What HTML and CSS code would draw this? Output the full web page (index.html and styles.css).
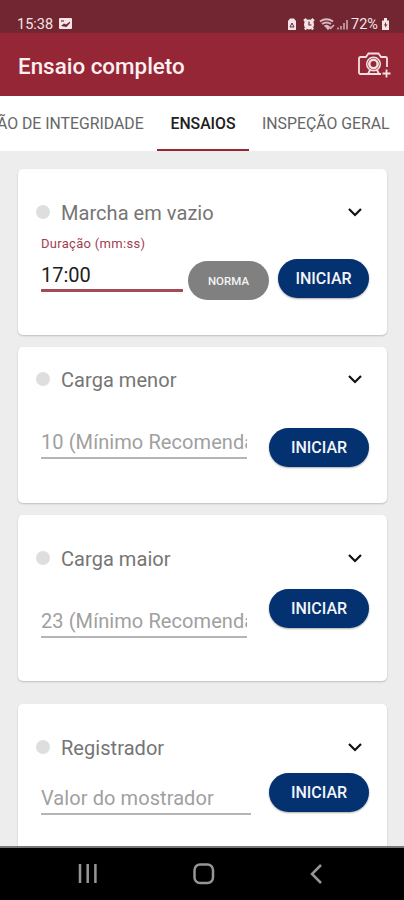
FILE: index.html
```
<!DOCTYPE html>
<html lang="pt">
<head>
<meta charset="utf-8">
<title>Ensaio completo</title>
<link rel="stylesheet" href="styles.css">
</head>
<body>
<div class="screen">
  <div class="status">
    <span class="time">15:38</span>
    <svg class="photo" width="13" height="11" viewBox="0 0 13 11"><rect width="13" height="11" rx="1" fill="#f3e5e7"/><path d="M2 8l3-2.500 2 1L11 3.500v1.500L7.500 9z" fill="#722633"/><rect x="2" y="2" width="3" height="2" fill="#a77780"/></svg>
    <svg class="indicators" width="61" height="14" viewBox="0 0 61 14">
      <path d="M1 4l2-2.500h4L9 4v9H1z" fill="#f3e5e7"/><path d="M3 10l2-4 2 4z" fill="none" stroke="#722633"/>
      <circle cx="22" cy="7.500" r="5" fill="#f3e5e7"/><path d="M17 4l2.500-2M27 4l-2.500-2M18 12.500l1-1.500M26 12.500L25 11" stroke="#f3e5e7" stroke-width="2.400"/><path d="M22 4.500v3.500h2.500" fill="none" stroke="#722633" stroke-width="1.200"/>
      <path d="M33 4.500Q39.500 0 46 4.500M35 7q4.500-3 9 0M37.500 9.500q2-1.500 4 0" fill="none" stroke="#d6bcc1" stroke-width="2"/><path d="M41 12l-1.500-2h3zM43 12l4-4" fill="#d6bcc1" stroke="#d6bcc1" stroke-width="1.500"/>
      <path d="M51 12.500v-2M54 12.500V9M57 12.500V6M60 12.500V3" stroke="#bd9aa1" stroke-width="1.800"/>
    </svg>
    <span class="percent">72%</span>
    <svg class="battery" width="7" height="12" viewBox="0 0 7 12"><path d="M0 2.500h2V0h3v2.500h2V12H0z" fill="#f3e5e7"/><path d="M4 4L2 7.500h1.500L3 10l2.500-3.500H4z" fill="#722633"/></svg>
  </div>
  <header class="appbar">
    <h1>Ensaio completo</h1>
    <svg width="34" height="26" viewBox="0 0 34 26" fill="none" stroke="#f6dfe2" stroke-width="1.800">
      <path d="M24 22H3.500Q2 22 2 20.500V6.500Q2 5 3.500 5H9l2.500-3.500h10L24 5h4.500Q30 5 30 6.500V15"/>
      <circle cx="16.500" cy="12" r="6.800" stroke-width="1.500"/><circle cx="16.500" cy="12" r="4.200" stroke-width="2.500"/>
      <path d="M13 18l-2 4M20 18l2 4M29.500 17.500v8M25.500 21.500h8"/>
    </svg>
  </header>
  <nav class="tabs">
    <span class="tab first">ÃO DE INTEGRIDADE</span>
    <span class="tab active">ENSAIOS</span>
    <span class="tab last">INSPEÇÃO GERAL</span>
  </nav>
  <main>
    <section class="card vazio">
      <div class="head"><i class="dot"></i><h2>Marcha em vazio</h2><svg class="chev" width="14" height="9" viewBox="0 0 14 9"><path d="M1 1l6 6 6-6"/></svg></div>
      <div class="row">
        <div class="field duration"><label>Duração (mm:ss)</label><span class="value">17:00</span></div>
        <button class="norma">NORMA</button>
        <button class="start small">INICIAR</button>
      </div>
    </section>
    <section class="card menor">
      <div class="head"><i class="dot"></i><h2>Carga menor</h2><svg class="chev" width="14" height="9" viewBox="0 0 14 9"><path d="M1 1l6 6 6-6"/></svg></div>
      <div class="row"><div class="field"><span class="hint">10 (Mínimo Recomendado)</span></div><button class="start">INICIAR</button></div>
    </section>
    <section class="card maior">
      <div class="head"><i class="dot"></i><h2>Carga maior</h2><svg class="chev" width="14" height="9" viewBox="0 0 14 9"><path d="M1 1l6 6 6-6"/></svg></div>
      <div class="row"><div class="field"><span class="hint">23 (Mínimo Recomendado)</span></div><button class="start">INICIAR</button></div>
    </section>
    <section class="card registrador">
      <div class="head"><i class="dot"></i><h2>Registrador</h2><svg class="chev" width="14" height="9" viewBox="0 0 14 9"><path d="M1 1l6 6 6-6"/></svg></div>
      <div class="row"><div class="field wide"><span class="hint">Valor do mostrador</span></div><button class="start">INICIAR</button></div>
    </section>
  </main>
  <footer class="navbar">
    <svg width="20" height="20" viewBox="0 0 20 20"><path d="M2 0v19M9.700 0v19M17.400 0v19"/></svg>
    <svg width="22" height="22" viewBox="0 0 22 22"><rect x="1.500" y="1.500" width="18.500" height="18.500" rx="5.500"/></svg>
    <svg width="14" height="20" viewBox="0 0 14 20"><path d="M12 1L3 10l9 9"/></svg>
  </footer>
</div>
</body>
</html>
```
FILE: styles.css
```
* { box-sizing: border-box; }
body { margin: 0; font-family: Roboto, sans-serif; background: #ededed; }
h1, h2 { margin: 0; }
.screen { width: 404px; height: 900px; display: flex; flex-direction: column; overflow: hidden; }
.status { height: 33px; flex: none; background: #712632; display: flex; padding: 14px 15px 0 17px; color: #f3e5e7; font-size: 14.500px; line-height: 21px; }
.time { width: 37px; }
.photo { margin: 4px 0 0 5px; }
.indicators { margin: 3px 3px 0 auto; }
.percent { width: 28px; margin-right: 3px; }
.battery { margin-top: 4px; }
.appbar { height: 63px; flex: none; background: #952636; display: flex; justify-content: space-between; padding: 0 13px 0 18px; }
.appbar h1 { color: #fdeff0; font-size: 22.400px; font-weight: 500; line-height: 66px; white-space: nowrap; }
.appbar svg { margin-top: 19px; }
.tabs { height: 55px; flex: none; background: #fff; display: flex; color: #666; font-size: 15.800px; line-height: 56px; white-space: nowrap; }
.first { width: 160px; margin-left: -3px; }
.active { width: 92px; text-align: center; color: #202020; font-weight: 500; border-bottom: 2px solid #952636; }
.last { padding-left: 13px; }
main { flex: 1; min-height: 0; overflow: hidden; padding: 18px 17px 0 18px; }
.card { background: #fff; border-radius: 5px; box-shadow: 0 1px 2px #0003; padding: 0 18px; }
.vazio { height: 166px; margin-bottom: 12px; padding-top: 31px; }
.menor { height: 156px; margin-bottom: 12px; padding-top: 20px; }
.maior { height: 166px; margin-bottom: 23px; padding-top: 31px; }
.registrador { height: 166px; padding-top: 31px; }
.head { height: 24px; display: flex; align-items: center; }
.dot { width: 14px; height: 14px; border-radius: 50%; background: #dedede; margin-right: 11px; }
.head h2 { font-size: 20px; font-weight: 400; line-height: 24px; padding-top: 1px; color: #757575; letter-spacing: .05px; }
.chev { margin: 0 7px 0 auto; fill: none; stroke: #111; stroke-width: 2.200; }
.row { display: flex; align-items: flex-start; padding-left: 5px; }
.field { width: 206px; height: 31px; border-bottom: 2px solid #b5b5b5; overflow: hidden; }
.wide { width: 210px; }
.hint { display: block; font-size: 20px; line-height: 28px; color: #a0a0a0; letter-spacing: .08px; white-space: nowrap; }
.start { margin-left: auto; width: 100px; height: 39px; border: 0; border-radius: 20px; background: #04316f; color: #f1f4fa; font: 500 16px Roboto, sans-serif; padding: 0; box-shadow: 0 1px 2px #0005; }
.small { width: 91px; }
.vazio .field { width: 142px; height: 58px; margin-top: 10px; border-bottom: 3px solid #a54a59; }
.vazio label { display: block; font-size: 13px; line-height: 20px; color: #a24052; letter-spacing: .3px; }
.value { display: block; font-size: 20px; line-height: 24px; margin-top: 9px; color: #202020; }
.norma { width: 81px; height: 39px; margin: 37px 0 0 5px; padding: 0; border: 0; border-radius: 20px; background: #808080; color: #f4f4f4; font: 500 11.500px Roboto, sans-serif; }
.vazio .start { margin-top: 35px; }
.menor .field, .maior .field { margin-top: 37px; }
.menor .start { margin-top: 37px; }
.maior .start { margin-top: 19px; }
.registrador .field { margin-top: 25px; }
.registrador .start { margin-top: 14px; }
.navbar { height: 54px; flex: none; background: #000; border-top: 2px solid #777; display: flex; align-items: center; padding: 0 81px 0 78px; justify-content: space-between; }
.navbar svg { fill: none; stroke: #969696; stroke-width: 2.500; }
```
